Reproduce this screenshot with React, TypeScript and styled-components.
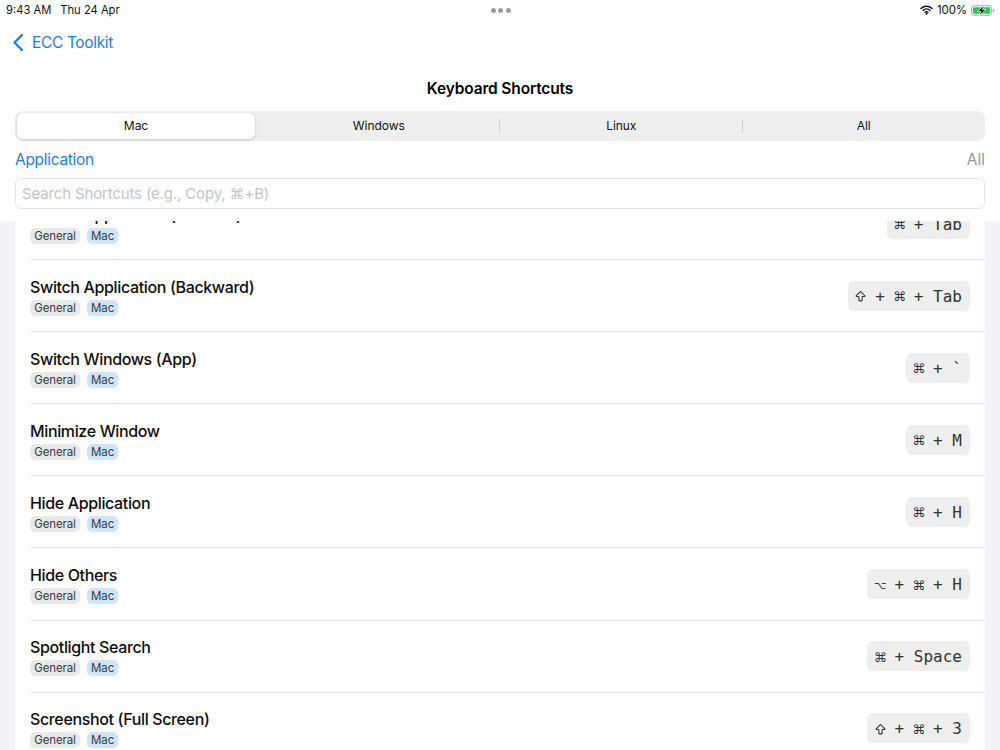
import React from "react";
import styled, { createGlobalStyle } from "styled-components";
import { ArrowBigUp } from "lucide-react";

const Global = createGlobalStyle`
  html, body { margin: 0; padding: 0; height: 100%; background: #fff; }
  * { box-sizing: border-box; }
  body { font-family: Inter, "Liberation Sans", sans-serif; color: #000; }
`;

const Page = styled.div`
  width: 1000px;
  height: 750px;
  display: flex;
  flex-direction: column;
  overflow: hidden;
  background: #fff;
`;

const Header = styled.header`
  height: 209px;
  flex: none;
  padding: 0 15px;
  display: flex;
  flex-direction: column;
  background: #fff;
`;

const StatusBar = styled.div`
  height: 20px;
  margin: 0 -10px 0 -9px;
  display: grid;
  grid-template-columns: 1fr auto 1fr;
  align-items: center;
  font-size: 11.2px;
  font-weight: 400;
  color: #111;
`;

const StatusLeft = styled.div`
  display: flex;
  gap: 9px;
`;

const Dots = styled.div`
  display: flex;
  gap: 2.5px;
`;

const Dot = styled.span`
  width: 5px;
  height: 5px;
  border-radius: 50%;
  background: #9a9a9e;
`;

const StatusRight = styled.div`
  display: flex;
  justify-content: flex-end;
  align-items: center;
  gap: 4px;
  font-size: 11.5px;
  letter-spacing: -0.1px;
`;

const BackLink = styled.div`
  height: 44px;
  margin-left: -3px;
  display: flex;
  align-items: center;
  gap: 8px;
  color: #1c7cf2;
  font-size: 15.5px;
  letter-spacing: -0.35px;
`;

const Title = styled.h1`
  margin: 0;
  height: 47px;
  padding-top: 2px;
  display: flex;
  align-items: center;
  justify-content: center;
  font-size: 15.5px;
  font-weight: 600;
  letter-spacing: -0.15px;
`;

const Segments = styled.div`
  height: 30px;
  border-radius: 8px;
  background: #eeeeef;
  display: grid;
  grid-template-columns: repeat(4, 1fr);
`;

const Segment = styled.div<{ $active?: boolean; $divider?: boolean }>`
  display: flex;
  align-items: center;
  justify-content: center;
  padding-bottom: 2px;
  font-size: 12px;
  letter-spacing: -0.05px;
  font-weight: 400;
  color: #111;
  border-radius: 6px;
  margin: ${(p) => (p.$active ? "2px 2.5px 2px 2px" : "0")};
  background: ${(p) => (p.$active ? "#fff" : "transparent")};
  box-shadow: ${(p) => (p.$active ? "0 1px 3px rgba(0,0,0,.16)" : "none")};
  position: relative;
  &::before {
    content: "";
    display: ${(p) => (p.$divider ? "block" : "none")};
    position: absolute;
    left: -1px;
    top: 8px;
    bottom: 8px;
    width: 1px;
    background: #cfcfd2;
  }
`;

const FilterRow = styled.div`
  height: 37px;
  padding-bottom: 1px;
  display: flex;
  align-items: center;
  justify-content: space-between;
  font-size: 15.5px;
`;

const FilterLabel = styled.span`
  color: #1c7cf2;
  letter-spacing: -0.3px;
`;

const FilterValue = styled.span`
  color: #98989c;
`;

const Search = styled.input`
  height: 31px;
  width: 100%;
  flex: none;
  border: 1px solid #e2e2e4;
  border-radius: 6px;
  background: #fff;
  padding: 0 6px;
  font: 400 15px Inter, "DejaVu Sans", sans-serif;
  letter-spacing: -0.15px;
  outline: none;
  &::placeholder {
    color: #c4c4c6;
    opacity: 1;
  }
`;

const Scroller = styled.main`
  flex: 1;
  min-height: 0;
  padding-top: 12px;
  display: flex;
  background: #fff;
`;

const Viewport = styled.div`
  flex: 1;
  min-width: 0;
  padding: 0 15px;
  overflow: hidden;
  background: #f2f2f7;
`;

const List = styled.ul`
  list-style: none;
  margin: -33px 0 0;
  padding: 0 0 0 15px;
  background: #fff;
`;

const Row = styled.li`
  height: 72.1px;
  display: flex;
  align-items: center;
  justify-content: space-between;
  padding-right: 15px;
  border-bottom: 1px solid #e4e4e6;
`;

const RowText = styled.div`
  display: flex;
  flex-direction: column;
  gap: 2px;
`;

const RowName = styled.div`
  font-size: 16px;
  line-height: 22px;
  font-weight: 550;
  letter-spacing: -0.36px;
  color: #0c0c0c;
`;

const Tags = styled.div`
  display: flex;
  gap: 7px;
`;

const Tag = styled.span<{ $blue?: boolean }>`
  height: 16px;
  padding: 0 4.2px;
  border-radius: 5px;
  display: flex;
  align-items: center;
  font-size: 11.5px;
  letter-spacing: -0.12px;
  color: #3a3a3c;
  background: ${(p) => (p.$blue ? "#cfe4fd" : "#e9e9ea")};
`;

const Keys = styled.kbd`
  height: 30px;
  padding: 2px 8px 0;
  border-radius: 6px;
  background: #eeeeef;
  display: flex;
  align-items: center;
  font: 400 16px/1 "DejaVu Sans Mono", monospace;
  color: #333;
  white-space: pre;
`;

const Modifier = styled.span<{ $narrow?: boolean }>`
  width: 9.63px;
  overflow: visible;
  display: flex;
  justify-content: center;
  align-items: center;
  font: 400 ${(p) => (p.$narrow ? "10.5px" : "13px")}/1 "DejaVu Sans", sans-serif;
`;

const shortcuts: [string, string][] = [
  ["Switch Application (Forward)", "⌘ + Tab"],
  ["Switch Application (Backward)", "⇧ + ⌘ + Tab"],
  ["Switch Windows (App)", "⌘ + `"],
  ["Minimize Window", "⌘ + M"],
  ["Hide Application", "⌘ + H"],
  ["Hide Others", "⌥ + ⌘ + H"],
  ["Spotlight Search", "⌘ + Space"],
  ["Screenshot (Full Screen)", "⇧ + ⌘ + 3"],
];

const renderKeys = (keys: string) =>
  keys.split(/([⇧⌘⌥])/).map((part, i) => {
    if (part === "⇧") {
      return (
        <Modifier key={i}>
          <ArrowBigUp size={13} strokeWidth={2} style={{ flex: "none" }} aria-label="Shift" />
        </Modifier>
      );
    }
    if (part === "⌥") return <Modifier key={i} $narrow>{part}</Modifier>;
    return part === "⌘" ? <Modifier key={i}>{part}</Modifier> : <span key={i}>{part}</span>;
  });

const Wifi = () => (
  <svg width="13" height="10" viewBox="0 0 14 11" fill="none" stroke="#111" strokeLinecap="round">
    <path d="M1 3.8a8.6 8.6 0 0 1 12 0" strokeWidth="1.7" />
    <path d="M3.2 6a5.4 5.4 0 0 1 7.6 0" strokeWidth="1.6" />
    <path d="M5.3 8.1a2.4 2.4 0 0 1 3.4 0" strokeWidth="1.5" />
    <circle cx="7" cy="9.6" r=".7" fill="#111" strokeWidth=".8" />
  </svg>
);

const Battery = () => (
  <svg width="24" height="13" viewBox="0 0 25 13">
    <rect x=".5" y="1.5" width="21" height="10" rx="2.8" fill="none" stroke="#a3a3a5" />
    <rect x="2" y="3" width="18" height="7" rx="1.4" fill="#27c552" />
    <path d="M23 4.7c1 .3 1.4 1 1.4 1.8s-.4 1.5-1.4 1.8z" fill="#a3a3a5" />
    <path d="M14 .6 6.6 7.5h3.6l-1.9 5 7.4-7.1h-3.7z" fill="#111" stroke="#fff" strokeWidth=".8" />
  </svg>
);

const Chevron = () => (
  <svg width="12" height="19" viewBox="0 0 12 19" fill="none" stroke="#1c7cf2" strokeWidth="2.4" strokeLinecap="round" strokeLinejoin="round">
    <path d="M10 2 2.5 9.5 10 17" />
  </svg>
);

export default function App() {
  return (
    <Page>
      <Global />
      <Header>
        <StatusBar>
          <StatusLeft>
            <span>9:43 AM</span>
            <span>Thu 24 Apr</span>
          </StatusLeft>
          <Dots>
            <Dot />
            <Dot />
            <Dot />
          </Dots>
          <StatusRight>
            <Wifi />
            <span>100%</span>
            <Battery />
          </StatusRight>
        </StatusBar>
        <BackLink>
          <Chevron />
          <span>ECC Toolkit</span>
        </BackLink>
        <Title>Keyboard Shortcuts</Title>
        <Segments>
          <Segment $active>Mac</Segment>
          <Segment>Windows</Segment>
          <Segment $divider>Linux</Segment>
          <Segment $divider>All</Segment>
        </Segments>
        <FilterRow>
          <FilterLabel>Application</FilterLabel>
          <FilterValue>All</FilterValue>
        </FilterRow>
        <Search placeholder="Search Shortcuts (e.g., Copy, ⌘+B)" readOnly />
      </Header>
      <Scroller>
        <Viewport>
          <List>
            {shortcuts.map(([name, keys]) => (
              <Row key={name}>
                <RowText>
                  <RowName>{name}</RowName>
                  <Tags>
                    <Tag>General</Tag>
                    <Tag $blue>Mac</Tag>
                  </Tags>
                </RowText>
                <Keys>{renderKeys(keys)}</Keys>
              </Row>
            ))}
          </List>
        </Viewport>
      </Scroller>
    </Page>
  );
}
